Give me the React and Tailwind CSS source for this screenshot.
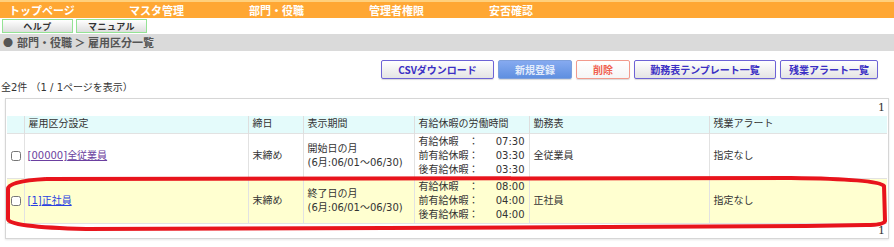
import React from 'react';

const jp = { fontFamily: '"DejaVu Sans", "Noto Sans CJK JP", sans-serif' };
const cjk = { fontFamily: '"Noto Sans CJK JP", sans-serif' };

const navItems = ['トップページ', 'マスタ管理', '部門・役職', '管理者権限', '安否確認'];

const rows = [
    {
        code: '[00000]',
        name: '全従業員',
        visited: true,
        period: '開始日の月',
        paid: ['07:30', '03:30', '03:30'],
        sheet: '全従業員',
        bg: 'bg-white',
    },
    {
        code: '[1]',
        name: '正社員',
        visited: false,
        period: '終了日の月',
        paid: ['08:00', '04:00', '04:00'],
        sheet: '正社員',
        bg: 'bg-[#ffffd0]',
    },
];

function ActionButton({ children, kind = 'normal', w }) {
    const styles = {
        normal: 'border-[#6d63d6] text-[#3b2fc4] bg-gradient-to-b from-white to-[#e4e4e4]',
        primary: 'border-[#7d9fdc] text-[#e3ecfb] bg-gradient-to-b from-[#86aaf0] to-[#5f8fe0]',
        danger: 'border-[#f29a8c] text-[#f0604e] bg-gradient-to-b from-white to-[#f6f6f6]',
    };
    return (
        <button className={`h-[19px] ${w} border rounded-[2px] text-[10px] font-bold leading-none shadow-[0_1px_1px_rgba(0,0,0,0.15)] ${styles[kind]}`}>
            {children}
        </button>
    );
}

export default function App() {
    return (
        <div className="w-[894px] h-[247px] bg-white text-[#333] relative overflow-hidden" style={jp}>
            {/* top menu */}
            <div className="h-[18px] bg-[#ffa733] border-t-2 border-[#ffd07c] flex items-center pl-[9px]" style={cjk}>
                {navItems.map(n => (
                    <div key={n} className="w-[120px] text-white text-[11px] font-bold leading-none">{n}</div>
                ))}
            </div>

            {/* help */}
            <div className="flex gap-[3px] pl-[2px] pt-[1px] h-[16px]" style={cjk}>
                <button className="w-[71px] h-[14px] border border-[#94e394] bg-gradient-to-b from-white to-[#dedede] text-[9px] font-bold leading-none tracking-[0.5px] text-[#333]">ヘルプ</button>
                <button className="w-[71px] h-[14px] border border-[#94e394] bg-gradient-to-b from-white to-[#dedede] text-[9px] font-bold leading-none tracking-[0.5px] text-[#333]">マニュアル</button>
            </div>

            {/* breadcrumb */}
            <div className="h-[17px] bg-[#dadada] flex items-center pl-[3px] text-[11px] font-bold text-[#555] leading-none" style={cjk}>
                <span className="text-[10px] mr-[4px]">●</span>
                部門・役職 ＞ 雇用区分一覧
            </div>

            {/* actions */}
            <div className="flex justify-end gap-[4px] pr-[16px] mt-[9px]" style={cjk}>
                <ActionButton w="w-[113px]">CSVダウンロード</ActionButton>
                <ActionButton w="w-[74px]" kind="primary">新規登録</ActionButton>
                <ActionButton w="w-[54px]" kind="danger">削除</ActionButton>
                <ActionButton w="w-[142px]">勤務表テンプレート一覧</ActionButton>
                <ActionButton w="w-[98px]">残業アラート一覧</ActionButton>
            </div>

            <div className="text-[10px] leading-[14px] mt-[2px] pl-[1px]">全2件 （1 / 1ページを表示）</div>

            {/* list */}
            <div className="ml-[5px] mt-[3px] w-[884px] border border-[#d6d6d6] p-[1px] shadow-[0_1px_2px_rgba(0,0,0,0.1)] relative">
                <div className="h-[16px] text-right pr-[2px] text-[11px] leading-[16px]" style={{ fontFamily: '"DejaVu Serif", serif' }}>1</div>
                <table className="w-[880px] table-fixed border-collapse text-[10px] leading-[14px]">
                    <colgroup>
                        <col className="w-[17px]" />
                        <col className="w-[224px]" />
                        <col className="w-[55px]" />
                        <col className="w-[111px]" />
                        <col className="w-[115px]" />
                        <col className="w-[180px]" />
                        <col className="w-[178px]" />
                    </colgroup>
                    <thead>
                        <tr className="bg-[#e4fbfb] h-[17px]">
                            <th className="border-r border-[#dedede]"></th>
                            <th className="border-r border-[#dedede] text-left font-normal pl-[4px]">雇用区分設定</th>
                            <th className="border-r border-[#dedede] text-left font-normal pl-[4px]">締日</th>
                            <th className="border-r border-[#dedede] text-left font-normal pl-[4px]">表示期間</th>
                            <th className="border-r border-[#dedede] text-left font-normal pl-[4px] whitespace-nowrap">有給休暇の労働時間</th>
                            <th className="border-r border-[#dedede] text-left font-normal pl-[4px]">勤務表</th>
                            <th className="text-left font-normal pl-[4px]">残業アラート</th>
                        </tr>
                    </thead>
                    <tbody>
                        {rows.map(r => (
                            <tr key={r.code} className={`${r.bg} h-[45px] border-t border-[#e2e2e2]`}>
                                <td className="border-r border-[#e2e2e2] pl-[4px]">
                                    <input type="checkbox" className="w-[10px] h-[10px] m-0 align-middle" />
                                </td>
                                <td className="border-r border-[#e2e2e2] pl-[3px]">
                                    <a href="#" className={`underline ${r.visited ? 'text-[#6b3fa0]' : 'text-[#2b3fe0]'}`}>{r.code}{r.name}</a>
                                </td>
                                <td className="border-r border-[#e2e2e2] pl-[4px]">末締め</td>
                                <td className="border-r border-[#e2e2e2] pl-[4px] whitespace-nowrap">
                                    <div>{r.period}</div>
                                    <div>(6月:06/01～06/30)</div>
                                </td>
                                <td className="border-r border-[#e2e2e2] pl-[4px] whitespace-nowrap">
                                    {['有給休暇　：', '前有給休暇：', '後有給休暇：'].map((l, i) => (
                                        <div key={l} className="flex w-[106px]">
                                            <span className="w-[62px]">{l}</span>
                                            <span className="flex-1 text-right">{r.paid[i]}</span>
                                        </div>
                                    ))}
                                </td>
                                <td className="border-r border-[#e2e2e2] pl-[4px]">{r.sheet}</td>
                                <td className="pl-[4px]">指定なし</td>
                            </tr>
                        ))}
                    </tbody>
                </table>
                <div className="h-[14px] border-t border-[#e2e2e2] text-right pr-[2px] text-[11px] leading-[14px]" style={{ fontFamily: '"DejaVu Serif", serif' }}>1</div>

                {/* red annotation */}
                <svg className="absolute left-0 top-0 pointer-events-none" width="890" height="140" viewBox="0 0 890 140">
                    <path
                        d="M 40 80 L 785 79 Q 872 80 878 87 L 879 122 Q 878 126 860 126 L 800 127 L 380 129 L 80 130 Q 2 128 2 120 L 2 90 Q 2 82 40 80"
                        fill="none"
                        stroke="#e8141c"
                        strokeWidth="4"
                        strokeLinejoin="round"
                    />
                </svg>
            </div>
        </div>
    );
}
